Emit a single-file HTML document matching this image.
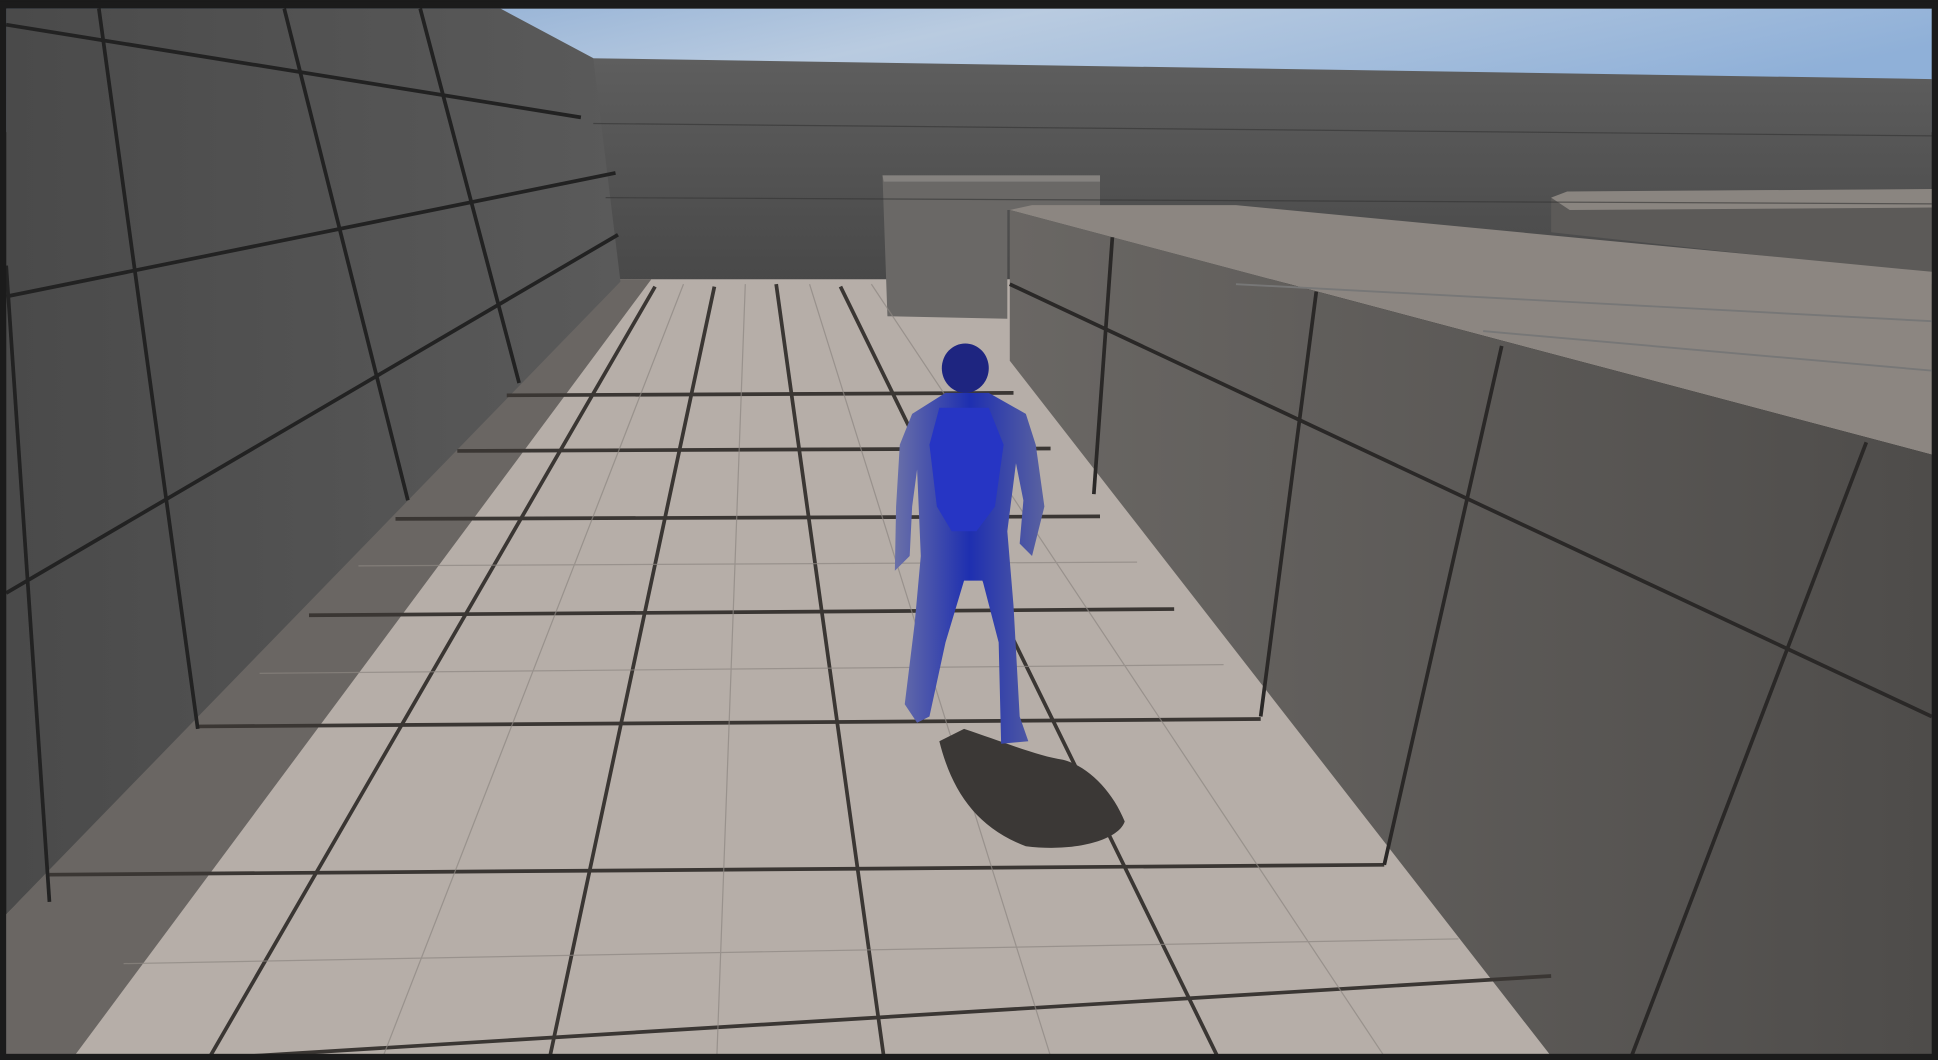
<!DOCTYPE html>
<html><head><meta charset="utf-8"><style>
html,body{margin:0;padding:0;background:#1b1b1b;overflow:hidden}
svg{display:block}
</style></head><body>
<svg width="1938" height="1060" viewBox="0 0 1568 858" preserveAspectRatio="none">
<defs>
<linearGradient id="sky" x1="0" y1="0" x2="1" y2="0.3">
<stop offset="0" stop-color="#7fa3d0"/><stop offset="0.5" stop-color="#b9cbe0"/><stop offset="1" stop-color="#8fb0d8"/></linearGradient>
<linearGradient id="lw" x1="0" y1="0" x2="1" y2="0"><stop offset="0" stop-color="#4a4a4a"/><stop offset="1" stop-color="#5a5a5a"/></linearGradient>
<linearGradient id="bw" x1="0" y1="0" x2="0" y2="1"><stop offset="0" stop-color="#5e5e5e"/><stop offset="1" stop-color="#484848"/></linearGradient>
<linearGradient id="side" x1="0" y1="0" x2="1" y2="0"><stop offset="0" stop-color="#6a6764"/><stop offset="1" stop-color="#4e4c4a"/></linearGradient>
<linearGradient id="blue" x1="0" y1="0" x2="1" y2="0"><stop offset="0" stop-color="#6a70a8"/><stop offset="0.5" stop-color="#1e2fb0"/><stop offset="1" stop-color="#5a62a0"/></linearGradient>
</defs>
<rect width="1568" height="858" fill="#1b1b1b"/>
<!-- sky -->
<rect x="5" y="7" width="1558" height="100" fill="url(#sky)"/>
<!-- back wall -->
<polygon points="470,47 1563,64 1563,230 500,228" fill="url(#bw)"/>
<!-- floor -->
<polygon points="5,740 500,226 830,226 1255,855 5,855" fill="#b6aea8"/>
<!-- shadow on floor -->
<polygon points="500,226 527,226 60,855 5,855 5,740" fill="#6a6663"/>
<!-- left wall -->
<polygon points="5,7 405,7 480,47 502,228 5,740" fill="url(#lw)"/>
<!-- small box -->
<polygon points="714,142 890,142 890,170 815,170 815,258 718,256" fill="#6a6866"/>
<polygon points="714,142 890,142 890,147 715,147" fill="#85827f"/>
<!-- back right box -->
<polygon points="1255,160 1268,155 1563,153 1563,222 1255,188" fill="#5c5a58"/>
<polygon points="1255,160 1268,155 1563,153 1563,168 1270,170" fill="#8a8580"/>
<!-- big box -->
<polygon points="817,170 835,166 1000,166 1563,220 1563,368 " fill="#8c8681"/>
<polygon points="817,170 1563,368 1563,855 1255,855 817,292" fill="url(#side)"/>
<!-- floor grid lines -->
<g stroke="#3a3633" stroke-width="3" fill="none">
<line x1="445" y1="855" x2="578" y2="232"/>
<line x1="715" y1="855" x2="628" y2="230"/>
<line x1="985" y1="855" x2="680" y2="232"/>
<line x1="170" y1="855" x2="530" y2="232"/>
<line x1="40" y1="708" x2="1120" y2="700"/>
<line x1="200" y1="855" x2="1255" y2="790"/>
<line x1="160" y1="588" x2="1020" y2="582"/>
<line x1="250" y1="498" x2="950" y2="493"/>
<line x1="320" y1="420" x2="890" y2="418"/>
<line x1="370" y1="365" x2="850" y2="363"/>
<line x1="410" y1="320" x2="820" y2="318"/>
</g>
<g stroke="#8d8782" stroke-width="1" fill="none" opacity="0.7">
<line x1="580" y1="855" x2="603" y2="230"/>
<line x1="850" y1="855" x2="655" y2="230"/>
<line x1="310" y1="855" x2="553" y2="230"/>
<line x1="1120" y1="855" x2="705" y2="230"/>
<line x1="100" y1="780" x2="1180" y2="760"/>
<line x1="210" y1="545" x2="990" y2="538"/>
<line x1="290" y1="458" x2="920" y2="455"/>
</g>
<!-- left wall lines -->
<g stroke="#222" stroke-width="3" fill="none">
<line x1="5" y1="240" x2="498" y2="140"/>
<line x1="5" y1="480" x2="500" y2="190"/>
<line x1="5" y1="20" x2="470" y2="95"/>
<line x1="80" y1="7" x2="160" y2="590"/>
<line x1="5" y1="215" x2="40" y2="730"/>
<line x1="230" y1="7" x2="330" y2="405"/>
<line x1="340" y1="7" x2="420" y2="310"/>
</g>
<!-- big box side lines -->
<g stroke="#2a2827" stroke-width="3" fill="none">
<line x1="817" y1="230" x2="1563" y2="580"/>
<line x1="1215" y1="280" x2="1120" y2="700"/>
<line x1="1510" y1="358" x2="1320" y2="855"/>
<line x1="1065" y1="236" x2="1020" y2="580"/>
<line x1="900" y1="192" x2="885" y2="400"/>
</g>
<g stroke="#777" stroke-width="1.5" fill="none"><line x1="1000" y1="230" x2="1563" y2="260"/><line x1="1200" y1="268" x2="1563" y2="300"/></g>
<!-- back wall lines -->
<g stroke="#333" stroke-width="1" opacity="0.6">
<line x1="480" y1="100" x2="1563" y2="110"/><line x1="490" y1="160" x2="1563" y2="165"/>
</g>
<!-- character shadow -->
<path d="M760,600 C770,640 790,670 830,685 C870,690 905,680 910,665 C900,640 880,620 860,615 C840,612 810,600 780,590 Z" fill="#3b3836"/>
<!-- character -->
<g fill="url(#blue)">
<ellipse cx="781" cy="298" rx="19" ry="20" fill="#1e2580"/>
<path d="M765,318 L800,318 L830,335 L838,360 L845,410 L835,450 L825,440 L828,405 L822,375 L815,430 L820,490 L825,580 L832,600 L810,602 L808,520 L795,470 L780,470 L765,520 L752,580 L742,585 L732,570 L740,505 L745,450 L742,380 L738,410 L736,450 L724,462 L725,410 L728,360 L738,335 Z"/>
<path d="M760,330 L800,330 L812,360 L805,410 L790,430 L770,430 L758,410 L752,360 Z" fill="#2635c4"/>
</g>
<!-- frame -->
<rect x="2.5" y="4" width="1563" height="851.5" fill="none" stroke="#1b1b1b" stroke-width="5"/>
</svg>
</body></html>
